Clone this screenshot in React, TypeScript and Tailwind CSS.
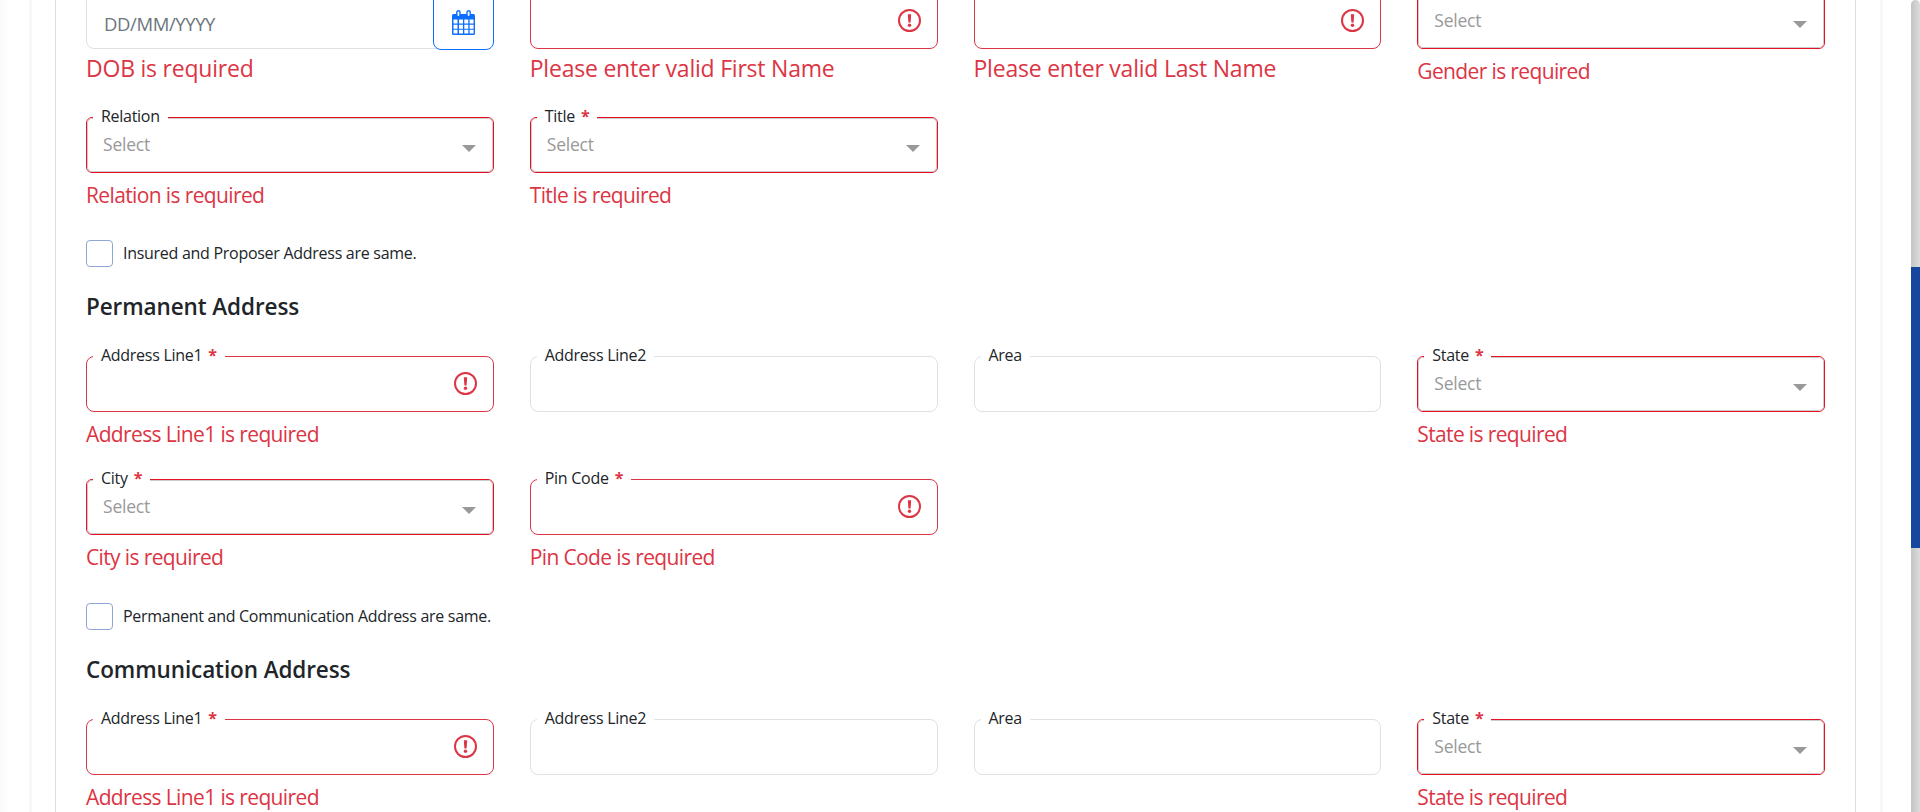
import React from "react";

type Variant = "none" | "text" | "date" | "select";
type FieldProps = { label?: string; required?: boolean; kind?: Variant; error?: string; large?: boolean };

const ERR = "text-[#dc3545]";

function Alert() {
  return (
    <svg className="absolute right-4 top-[15px] size-[23px]" viewBox="0 0 23 23" fill="none">
      <circle cx="11.5" cy="11.5" r="10.5" stroke="#dc3545" strokeWidth="2" />
      <path d="M9.8 5.2h3.4l-.6 8.3h-2.2z" fill="#dc3545" />
      <circle cx="11.5" cy="16.3" r="1.7" fill="#dc3545" />
    </svg>
  );
}

function Calendar() {
  return (
    <svg className="h-[25px] w-[23px]" viewBox="0 0 23 25">
      <path d="M1.5 4h20Q23 4 23 5.500V23.500Q23 25 21.500 25H1.500Q0 25 0 23.500V5.500Q0 4 1.500 4Z" fill="#0d6efd" />
      <path d="M1.500 9.500h4v4h-4zM7 9.500h4v4H7zM12.300 9.500h4v4h-4zM17.600 9.500h4v4h-4zM1.500 14.700h4v4h-4zM7 14.700h4v4H7zM12.300 14.700h4v4h-4zM17.600 14.700h4v4h-4zM1.500 19.800h4v3.700h-4zM7 19.800h4v3.700H7zM12.300 19.800h4v3.700h-4zM17.600 19.800h4v3.700h-4z" fill="#fff" />
      <rect x="4.800" y=".7" width="3.200" height="6" rx="1.600" fill="#fff" stroke="#0d6efd" strokeWidth="1.400" />
      <rect x="15" y=".7" width="3.200" height="6" rx="1.600" fill="#fff" stroke="#0d6efd" strokeWidth="1.400" />
    </svg>
  );
}

function Label({ text, required }: { text: string; required?: boolean }) {
  return (
    <span className="absolute -top-[14px] left-[6px] bg-white px-2 text-[16px] leading-[24px] tracking-[-0.28px] text-[#212529]">
      {text}
      {required && <b className="ml-[6px] font-bold text-[#dc3545]">*</b>}
    </span>
  );
}

function Field({ label, required, kind = "text", error, large }: FieldProps) {
  if (kind === "none") return <div />;
  return (
    <div>
      {kind === "date" && (
        <div className="relative flex h-14 items-center justify-between rounded-lg border border-[#dee2e6] pl-[17px]">
          <span className="pt-[6px] text-[18.500px] leading-6 tracking-[-0.4px] text-[#6c757d]">DD/MM/YYYY</span>
          <span className="-mr-px flex h-[58px] w-[61px] items-center justify-center rounded-lg border border-[#0d6efd] bg-white pt-[3px]">
            <Calendar />
          </span>
        </div>
      )}
      {kind === "text" && (
        <div className={error ? "relative h-14 rounded-lg border border-[#dc3545]" : "relative h-14 rounded-lg border border-[#dee2e6]"}>
          {label && <Label text={label} required={required} />}
          {error && <Alert />}
        </div>
      )}
      {kind === "select" && (
        <div className="relative h-14 rounded-md border border-[#e81123]">
          <div className="flex h-full items-center justify-between rounded-[5px] border border-[#ccc] pr-4 pl-[15px]">
            <span className="pb-[2px] text-[17.500px] leading-6 tracking-[-0.2px] text-[#999]">Select</span>
            <span className="mt-[6px] border-x-[7px] border-t-[7px] border-x-transparent border-t-[#999]" />
          </div>
          {label && <Label text={label} required={required} />}
        </div>
      )}
      {error && (
        <p className={large ? `${ERR} mt-[2px] text-[23px] leading-[34px] tracking-[-0.22px]` : `${ERR} mt-[6px] text-[21px] leading-[32px] tracking-[-0.63px]`}>
          {error}
        </p>
      )}
    </div>
  );
}

function Row({ fields, className }: { fields: FieldProps[]; className: string }) {
  return (
    <div className={`grid grid-cols-4 gap-x-9 ${className}`}>
      {fields.map((f, i) => <Field key={i} {...f} />)}
    </div>
  );
}

function Check({ text }: { text: string }) {
  return (
    <div className="flex h-[27px] items-center gap-[10px]">
      <span className="size-[27px] rounded border border-[#8fa5d3]" />
      <span className="pb-[2px] text-[16px] leading-6 tracking-[-0.28px] text-[#212529]">{text}</span>
    </div>
  );
}

const addressRow: FieldProps[] = [
  { label: "Address Line1", required: true, error: "Address Line1 is required" },
  { label: "Address Line2" },
  { label: "Area" },
  { label: "State", required: true, kind: "select", error: "State is required" },
];

export default function App() {
  return (
    <div className="flex h-[812px] overflow-hidden bg-white font-['Open_Sans','Noto_Sans',sans-serif]">
      <div className="flex flex-1 bg-linear-to-r from-[#fafafa] to-white to-[10px]">
        <div className="ml-[29px] w-[1854px] border-x-[3px] border-[#f8f8f8] pr-6 pl-[23px]">
          <main className="flow-root h-[812px] border-x border-[#dedede] px-[30px]">
            <Row
              className="-mt-[7px] h-[124px]"
              fields={[
                { kind: "date", error: "DOB is required", large: true },
                { error: "Please enter valid First Name", large: true },
                { error: "Please enter valid Last Name", large: true },
                { kind: "select", error: "Gender is required" },
              ]}
            />
            <Row
              className="h-[123px]"
              fields={[
                { label: "Relation", kind: "select", error: "Relation is required" },
                { label: "Title", required: true, kind: "select", error: "Title is required" },
              ]}
            />
            <Check text="Insured and Proposer Address are same." />
            <h2 className="mt-[22px] h-[67px] text-[22.500px] leading-[36px] font-semibold tracking-[-0.1px] text-[#212529]">Permanent Address</h2>
            <Row className="h-[123px]" fields={addressRow} />
            <Row
              className="h-[124px]"
              fields={[
                { label: "City", required: true, kind: "select", error: "City is required" },
                { label: "Pin Code", required: true, error: "Pin Code is required" },
              ]}
            />
            <Check text="Permanent and Communication Address are same." />
            <h2 className="mt-[22px] h-[67px] text-[22.500px] leading-[36px] font-semibold tracking-[-0.1px] text-[#212529]">Communication Address</h2>
            <Row className="h-[123px]" fields={addressRow} />
          </main>
        </div>
      </div>
      <div className="h-full w-[9px] rounded-t-[10px] bg-linear-to-r from-[#c4c4c4] to-[#dcdcdc] pt-[267px]">
        <div className="h-[281px] bg-[#16469d]" />
      </div>
    </div>
  );
}
